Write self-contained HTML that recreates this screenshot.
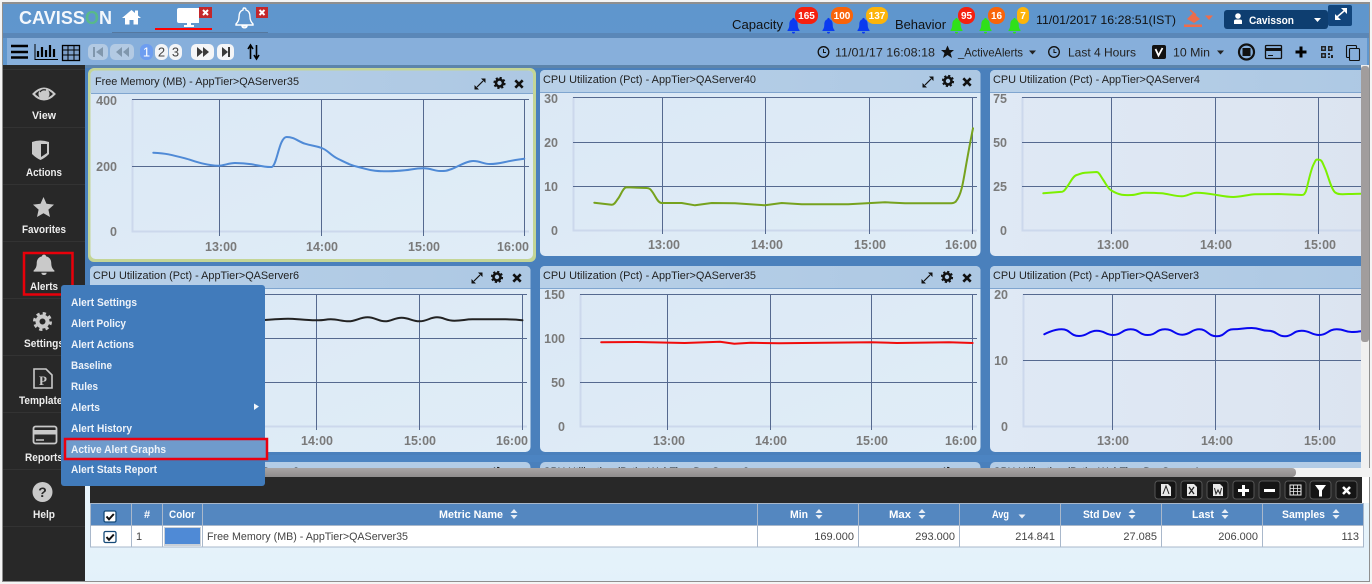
<!DOCTYPE html>
<html><head><meta charset="utf-8"><title>Active Alert Graphs</title>
<style>
html,body{margin:0;padding:0;width:1372px;height:584px;overflow:hidden;background:#fff}
svg{display:block;font-family:"Liberation Sans",sans-serif}
.t{font-size:11px;fill:#222}
.a{font-size:12.500px;font-weight:bold;fill:#7a7a7a}
.s{font-size:11px;font-weight:bold;fill:#eee}
.m{font-size:11px;font-weight:bold;fill:#eef3f9}
.h{font-size:11px;font-weight:bold;fill:#fff}
.c{font-size:11px;fill:#444}
.b{font-size:10px;font-weight:bold;fill:#fff;text-anchor:middle}
.k{font-size:12px;fill:#222}
.g{stroke:#55698f;stroke-width:1;fill:none}
.l{stroke:#ccd8ec;stroke-width:2;fill:none}
.p{fill:none;stroke-width:2;stroke-linejoin:round;stroke-linecap:round}
</style></head><body>
<svg xmlns="http://www.w3.org/2000/svg" width="1372" height="584" viewBox="0 0 1372 584">
<defs>
<linearGradient id="tg" x1="0" y1="0" x2="1" y2="0"><stop offset="0" stop-color="#b8d0e8"/><stop offset="1" stop-color="#adc8e3"/></linearGradient>
<linearGradient id="pg" x1="0" y1="0" x2="1" y2="1"><stop offset="0" stop-color="#dbe8f5"/><stop offset="1" stop-color="#e0edf7"/></linearGradient>
<linearGradient id="pg3" x1="0" y1="0" x2="1" y2="0"><stop offset="0" stop-color="#dfe9f5"/><stop offset="1" stop-color="#dce4f0"/></linearGradient>
<linearGradient id="bar" x1="0" y1="0" x2="0" y2="1"><stop offset="0" stop-color="#5f96cd"/><stop offset="1" stop-color="#6a9ed2"/></linearGradient>
<linearGradient id="bot" x1="0" y1="0" x2="0" y2="1"><stop offset="0" stop-color="#e9f5fc"/><stop offset="1" stop-color="#e3f1fa"/></linearGradient>
<linearGradient id="sc" x1="0" y1="0" x2="0" y2="1"><stop offset="0" stop-color="#a8a4a4"/><stop offset="1" stop-color="#8f8c8c"/></linearGradient>
<path id="bell" d="M10 1C11 1 11.6 1.7 11.6 2.6C14.6 3.4 15.6 6 15.6 9C15.6 12 16.5 14 18 15.5V16.5H2V15.5C3.5 14 4.4 12 4.4 9C4.4 6 5.4 3.4 8.4 2.6C8.4 1.7 9 1 10 1ZM8 17.5H12C12 19 11 19.6 10 19.6C9 19.6 8 19 8 17.5Z"/>
<g id="expand"><path d="M-3 3L3-3" stroke="#111" stroke-width="1.200"/><path d="M1-5.500H5.500V-1ZM-5.500 1V5.500H-1Z" fill="#111"/></g>
<g id="gear"><circle r="3.500" fill="none" stroke="#111" stroke-width="2.600"/><circle r="5.200" fill="none" stroke="#111" stroke-width="1.800" stroke-dasharray="2.200 1.880"/></g>
<g id="close"><path d="M-3.700-3.700L3.700 3.700M3.700-3.700L-3.700 3.700" stroke="#111" stroke-width="2.600"/></g>
<g id="sort"><path d="M-3.500-1L0-5L3.500-1ZM-3.500 1L0 5L3.500 1Z" fill="#e8eef6"/></g>
<g id="chk"><rect x="-6" y="-5.500" width="12" height="11" rx="1.500" fill="#fff" stroke="#154a78" stroke-width="1.300"/><path d="M-3.500 0L-1 2.800L3.800-2.500" fill="none" stroke="#111" stroke-width="2"/></g>
<g id="hdrbtn"><rect x="0" y="0" width="21" height="18" rx="3" fill="#151515" stroke="#555"/></g>
<clipPath id="c3"><rect x="85" y="455" width="1277" height="13"/></clipPath>
<clipPath id="rp"><rect x="985" y="66" width="376" height="402"/></clipPath>
</defs>

<!-- frame & bars -->
<rect width="1372" height="584" fill="#f4f4f4"/>
<rect x="2" y="2" width="1368" height="580" fill="#8f8f8f"/>
<rect x="3" y="4" width="1366" height="577" fill="url(#bar)"/>
<rect x="3" y="33" width="1366" height="5" fill="#5a87b8"/>
<rect x="7" y="38" width="1360" height="27" fill="#87afdb"/>
<rect x="85" y="65" width="1284" height="412" fill="#4a80bc"/>
<rect x="85" y="65" width="1284" height="3" fill="#5c84ab"/>
<rect x="85" y="455" width="1284" height="7" fill="#4c84c2"/>

<!-- top bar -->
<text x="19" y="24" font-size="18" font-weight="bold" fill="#f4f8fc" textLength="93" lengthAdjust="spacing">CAVISS<tspan fill="#58b98a">O</tspan>N</text>
<path d="M122 18L131.500 10L135 13V10.500H138V15.500L141 18H138V24.500H133.500V20H129.500V24.500H125V18Z" fill="#fff"/>
<path d="M179 8H199V23H191V25H194V27H184V25H187V23H179Q177 23 177 21V10Q177 8 179 8Z" fill="#fff"/>
<rect x="199" y="7" width="13" height="11" fill="#c3272b"/><path d="M203 10L208 15M208 10L203 15" stroke="#fff" stroke-width="2"/>
<rect x="155" y="28" width="57" height="2" fill="#f00"/>
<path d="M112 32.500H268" stroke="#55789f" stroke-width="1"/>
<path d="M244 8C246 8 246 9 246 10C250 11 250 15 250 17C250 20 251 22 253 24V25H236V24C238 22 239 20 239 17C239 15 239 11 243 10C243 9 243 8 244 8ZM242 26H247C247 27 246 27.800 244.500 27.800C243 27.800 242 27 242 26Z" fill="none" stroke="#fff" stroke-width="1.400"/>
<rect x="256" y="7" width="12" height="11" fill="#c3272b"/><path d="M259.500 10L264.500 15M264.500 10L259.500 15" stroke="#fff" stroke-width="2"/>

<text x="732" y="29" font-size="13" fill="#111" textLength="51" lengthAdjust="spacingAndGlyphs">Capacity</text>
<use href="#bell" transform="translate(786,17) scale(.75,.85)" fill="#0a3bf0"/>
<use href="#bell" transform="translate(821,17) scale(.75,.85)" fill="#0a3bf0"/>
<use href="#bell" transform="translate(856,17) scale(.75,.85)" fill="#0a3bf0"/>
<rect x="795" y="7" width="23" height="17" rx="8" fill="#f5200f"/><text class="b" x="806.500" y="19">165</text>
<rect x="831" y="7" width="22" height="17" rx="8" fill="#f9640a"/><text class="b" x="842" y="19">100</text>
<rect x="866" y="7" width="22" height="17" rx="8" fill="#fdb40a"/><text class="b" x="877" y="19">137</text>
<text x="895" y="29" font-size="13" fill="#111" textLength="51" lengthAdjust="spacingAndGlyphs">Behavior</text>
<use href="#bell" transform="translate(949,17) scale(.75,.85)" fill="#2fe01a"/>
<use href="#bell" transform="translate(978,17) scale(.75,.85)" fill="#2fe01a"/>
<use href="#bell" transform="translate(1007,17) scale(.75,.85)" fill="#2fe01a"/>
<rect x="958" y="7" width="17" height="17" rx="8" fill="#f5200f"/><text class="b" x="966.500" y="19">95</text>
<rect x="988" y="7" width="17" height="17" rx="8" fill="#f9640a"/><text class="b" x="996.500" y="19">16</text>
<rect x="1017" y="7" width="12" height="17" rx="6" fill="#fdb40a"/><text class="b" x="1023" y="19">7</text>
<text x="1036" y="24" font-size="12" fill="#111" textLength="140" lengthAdjust="spacingAndGlyphs">11/01/2017 16:28:51(IST)</text>
<path d="M1187 19L1193 13L1200 19L1194 23Z" fill="#ee6d4c"/><path d="M1190 10L1196 15" stroke="#ee6d4c" stroke-width="1.500"/><rect x="1184" y="24.500" width="18" height="2.500" fill="#ee6d4c"/>
<path d="M1205 15.500H1213L1209 20Z" fill="#ee6d4c"/>
<rect x="1224" y="10" width="104" height="19" rx="3" fill="#0e3e70"/>
<circle cx="1238" cy="16" r="2.800" fill="#fff"/><path d="M1234 24V21Q1234 19.500 1236 19.500H1240Q1242 19.500 1242 21V24Z" fill="#fff"/>
<text x="1249" y="24" font-size="11" font-weight="bold" fill="#fff" textLength="45" lengthAdjust="spacingAndGlyphs">Cavisson</text>
<path d="M1314 18H1321L1317.500 22Z" fill="#fff"/>
<rect x="1328" y="5" width="24" height="21" rx="2" fill="#11457c"/>
<path d="M1337 17L1344 11" stroke="#fff" stroke-width="1.500"/><path d="M1341 8H1347V14ZM1335 14V20H1341Z" fill="#fff"/>

<!-- toolbar left -->
<path d="M11 46H28M11 52H28M11 57.500H28" stroke="#000" stroke-width="2.400"/>
<path d="M35 44V59.500H58" fill="none" stroke="#000" stroke-width="1"/><path d="M38 57V51M42 57V47M46 57V50M50 57V45M54 57V49" stroke="#000" stroke-width="2.200"/>
<rect x="62.500" y="45.500" width="17" height="15" fill="#7d9fc9" stroke="#000" stroke-width="1.300"/><path d="M62 50H80M62 55H80M68 45V61M74 45V61" stroke="#000" stroke-width="1"/>
<rect x="88" y="44" width="20" height="16" rx="5" fill="#b3cae3"/><path d="M94 47V57" stroke="#8097ad" stroke-width="2"/><path d="M103 47V57L96 52Z" fill="#8097ad"/>
<rect x="110" y="44" width="24" height="16" rx="5" fill="#b3cae3"/><path d="M122 47V57L116 52ZM129 47V57L123 52Z" fill="#8097ad"/>
<rect x="140" y="44" width="13" height="16" rx="6" fill="#6d9df0"/><text x="146.500" y="56.500" font-size="13" fill="#fff" text-anchor="middle">1</text>
<rect x="155" y="44" width="13" height="16" rx="6" fill="#f2f4f7"/><text x="161.500" y="56.500" font-size="13" fill="#444" text-anchor="middle">2</text>
<rect x="169" y="44" width="13" height="16" rx="6" fill="#f2f4f7"/><text x="175.500" y="56.500" font-size="13" fill="#444" text-anchor="middle">3</text>
<rect x="191" y="44" width="23" height="16" rx="5" fill="#f4f5f7"/><path d="M197 47V57L203 52ZM203 47V57L209 52Z" fill="#3a3a3a"/>
<rect x="217" y="44" width="17" height="16" rx="5" fill="#f4f5f7"/><path d="M222 47V57L228 52Z" fill="#3a3a3a"/><path d="M229 47V57" stroke="#3a3a3a" stroke-width="2"/>
<path d="M250.500 59V46M248 49L250.500 45L253 49M256.500 45V58M254 55L256.500 59L259 55" fill="none" stroke="#000" stroke-width="1.600"/>

<!-- toolbar right -->
<circle cx="823.500" cy="52" r="5.300" fill="none" stroke="#111" stroke-width="1.300"/><path d="M823.500 49V52.500H826" fill="none" stroke="#111"/>
<text class="k" x="835" y="56.500" textLength="100" lengthAdjust="spacingAndGlyphs">11/01/17 16:08:18</text>
<path d="M947.500 45.500L949.500 50H954L950.500 53L952 58L947.500 55L943 58L944.500 53L941 50H945.500Z" fill="#111"/>
<text class="k" x="958" y="56.500" textLength="65" lengthAdjust="spacingAndGlyphs">_ActiveAlerts</text>
<path d="M1029 50.500H1036L1032.500 54.500Z" fill="#222"/>
<circle cx="1054" cy="52" r="5.300" fill="none" stroke="#111" stroke-width="1.300"/><path d="M1054 49V52.500H1056.500" fill="none" stroke="#111"/>
<text class="k" x="1068" y="56.500" textLength="68" lengthAdjust="spacingAndGlyphs">Last 4 Hours</text>
<rect x="1152" y="45" width="14" height="14" rx="2" fill="#111"/><path d="M1155.500 49L1158.500 55.500L1162.500 48" fill="none" stroke="#fff" stroke-width="1.800"/>
<text class="k" x="1173" y="56.500" textLength="37" lengthAdjust="spacingAndGlyphs">10 Min</text>
<path d="M1217 50.500H1224L1220.500 54.500Z" fill="#222"/>
<circle cx="1246.500" cy="52" r="7.500" fill="none" stroke="#111" stroke-width="2.200"/><rect x="1242.500" y="48" width="8" height="8" fill="#111"/>
<rect x="1265.500" y="45.500" width="16" height="13" rx="1" fill="none" stroke="#111" stroke-width="1.300"/><rect x="1265" y="48" width="17" height="3" fill="#111"/><path d="M1268 55.500H1273" stroke="#111"/>
<path d="M1301 46.500V57.500M1295.500 52H1306.500" stroke="#000" stroke-width="3"/>
<path d="M1321 46H1326V51H1321ZM1328 46H1332.500V51H1328ZM1321 53H1326V58H1321ZM1328 53H1330V55H1328ZM1331 55H1333V58H1331ZM1328 56.500H1330V58H1328Z" fill="#222"/><path d="M1322.500 47.500H1324.500V49.500H1322.500ZM1329.500 47.500H1331V49.500H1329.500ZM1322.500 54.500H1324.500V56.500H1322.500Z" fill="#87afdb"/>
<rect x="1346.500" y="45.500" width="10" height="12" rx="1" fill="none" stroke="#111" stroke-width="1.100"/><rect x="1349.500" y="48.500" width="10" height="12" rx="1" fill="#87afdb" stroke="#111" stroke-width="1.100"/>

<!-- panel 1 -->
<rect x="88" y="68" width="448" height="194" rx="6" fill="#c4d596"/>
<rect x="90.500" y="70.500" width="442.500" height="188.500" rx="5" fill="url(#pg)"/>
<path d="M90.500 93V75.500Q90.500 70.500 95.500 70.500H528Q533 70.500 533 75.500V93Z" fill="url(#tg)"/><path d="M91 93.500H533" stroke="#7fa5cf"/>
<text class="t" x="95" y="85" textLength="204" lengthAdjust="spacingAndGlyphs">Free Memory (MB) - AppTier&gt;QAServer35</text>
<use href="#expand" x="480" y="84"/><use href="#gear" x="499.500" y="83"/><use href="#close" x="519" y="84"/>
<path class="l" d="M132.500 99V231.500H529"/>
<path class="g" d="M132 99.500H529M132 166.500H529M219.500 99V236M321.500 99V236M423.500 99V236M524.500 99V236"/>
<text class="a" x="117" y="105" text-anchor="end">400</text><text class="a" x="117" y="171" text-anchor="end">200</text><text class="a" x="117" y="236" text-anchor="end">0</text>
<text class="a" x="205" y="251">13:00</text><text class="a" x="306" y="251">14:00</text><text class="a" x="408" y="251">15:00</text><text class="a" x="497" y="251">16:00</text>
<path class="p" stroke="#4f8ad6" d="M153.300 152.700C160 153 164 153.400 168.300 154.300S180 157 185 158.300S196 162 201.700 163.300S213 165.700 218.300 165.700S229 163 235 163S246 163.400 251.700 164.300S266 167.500 271.700 167C277 166 279 137 286.700 137S298 141.500 305 143.700S315 145.500 321.700 148S330 155 338.300 159S350 165 358.300 167S368 170 375 170.700S382 171.300 388.300 171.300S398 171 405 170.300S415 168.300 423.300 168.300S434 171 440 171S446 171 451.700 169S466 161 473.300 161S483 164 490 164S501 162.800 508.300 161.300S518 159.500 524.300 158.700"/>

<!-- panel 2 -->
<rect x="540" y="70" width="440.500" height="186" rx="5" fill="url(#pg)"/>
<path d="M540 92V75Q540 70 545 70H975.500Q980.500 70 980.500 75V92Z" fill="url(#tg)"/><path d="M540 92.500H980.500" stroke="#7fa5cf"/>
<text class="t" x="543" y="83" textLength="213" lengthAdjust="spacingAndGlyphs">CPU Utilization (Pct) - AppTier&gt;QAServer40</text>
<use href="#expand" x="928" y="82"/><use href="#gear" x="948" y="81"/><use href="#close" x="967" y="82"/>
<path class="l" d="M573.500 97V230.500H977"/>
<path class="g" d="M573 97.500H977M573 142.500H977M573 186.500H977M662.500 97V234M765.500 97V234M869.500 97V234M972.500 97V234"/>
<text class="a" x="558" y="103" text-anchor="end">30</text><text class="a" x="558" y="147" text-anchor="end">20</text><text class="a" x="558" y="191" text-anchor="end">10</text><text class="a" x="558" y="235" text-anchor="end">0</text>
<text class="a" x="648" y="249">13:00</text><text class="a" x="751" y="249">14:00</text><text class="a" x="854" y="249">15:00</text><text class="a" x="945" y="249">16:00</text>
<path class="p" stroke="#76a21e" d="M594.300 202.700L611.700 204.700C615 204.700 616 201 618.300 198.300S623 187.300 626.700 187.300L646.700 188C650 188 651 190 653.300 193.300S658 203 661.700 203L681.700 203L695 205.300L711.700 203L735 203.300L765 205.300L781.700 203L801.700 204.300L848.300 204.300L885 202.300L905 203.300L948.300 203.300C953 203.300 954 203 955.700 201.700C958 199 960 195 961.700 188.300S964.500 174 966.700 161.700S971 138 973 128.300"/>

<!-- panel 3 -->
<g clip-path="url(#rp)">
<rect x="990" y="70" width="400" height="186" rx="5" fill="url(#pg3)"/>
<path d="M990 92V75Q990 70 995 70H1390V92Z" fill="url(#tg)"/><path d="M990 92.500H1380" stroke="#7fa5cf"/>
<text class="t" x="993" y="83" textLength="207" lengthAdjust="spacingAndGlyphs">CPU Utilization (Pct) - AppTier&gt;QAServer4</text>
<path class="l" d="M1022.500 97V230.500H1361"/>
<path class="g" d="M1022 97.500H1361M1022 142.500H1361M1022 186.500H1361M1111.500 97V234M1215.500 97V234M1318.500 97V234"/>
<text class="a" x="1007" y="103" text-anchor="end">75</text><text class="a" x="1007" y="147" text-anchor="end">50</text><text class="a" x="1007" y="191" text-anchor="end">25</text><text class="a" x="1007" y="235" text-anchor="end">0</text>
<text class="a" x="1097" y="249">13:00</text><text class="a" x="1200" y="249">14:00</text><text class="a" x="1304" y="249">15:00</text>
<path class="p" stroke="#7cf000" d="M1043.300 193.300L1062.300 191.700C1065 191 1066 188 1068.300 185S1073 176 1076.700 175S1081 173 1085 172.700L1096.700 172C1099 172 1100.500 176 1103.300 180S1108 188.500 1111 190.300S1117 194 1121.700 194.700S1127 195 1131.700 195S1140 192.700 1145 192.700S1156 192.800 1161.700 193.300S1176 196.300 1181.700 196.300S1191 192.700 1196.700 192.700S1208 193.500 1215 194.700S1227 197 1233.300 197S1248 194.700 1255 194.300L1278.300 194L1301.700 195C1304 195 1304.500 194 1305.700 191.700S1310 172 1313.300 165S1316 159.700 1319 159.700S1322.500 163 1325 168.300S1331 189 1335 192.300S1345 193.700 1361 193.700"/>
</g>

<!-- panel 4 -->
<rect x="90" y="266" width="440.500" height="186" rx="5" fill="url(#pg)"/>
<path d="M90 288V271Q90 266 95 266H525.500Q530.500 266 530.500 271V288Z" fill="url(#tg)"/><path d="M90 288.500H530.500" stroke="#7fa5cf"/>
<text class="t" x="93" y="279" textLength="206" lengthAdjust="spacingAndGlyphs">CPU Utilization (Pct) - AppTier&gt;QAServer6</text>
<use href="#expand" x="477" y="278"/><use href="#gear" x="497" y="277"/><use href="#close" x="517" y="278"/>
<path class="l" d="M130.500 294V426.500H527"/>
<path class="g" d="M130 294.500H527M130 338.500H527M130 382.500H527M214.500 294V430M316.500 294V430M419.500 294V430M522.500 294V430"/>
<text class="a" x="301" y="445">14:00</text><text class="a" x="404" y="445">15:00</text><text class="a" x="496" y="445">16:00</text>
<path class="p" stroke="#222" d="M264.700 320S280 318.700 288 318.700S305 320.300 315.700 320.300S324 319.300 330.800 319.300S342 321.300 348.700 321.300S360 317.300 367.600 317.300S378 321.300 385 321.300S394 317.700 401.600 317.700S412 321.300 419.500 321.300S430 317.300 437 317.300S446 320.700 454.400 320.700S465 319.300 472.400 319.300H505.400S516 319.300 522.400 320.300"/>

<!-- panel 5 -->
<rect x="540" y="266" width="440.500" height="186" rx="5" fill="url(#pg)"/>
<path d="M540 288V271Q540 266 545 266H975.500Q980.500 266 980.500 271V288Z" fill="url(#tg)"/><path d="M540 288.500H980.500" stroke="#7fa5cf"/>
<text class="t" x="543" y="279" textLength="213" lengthAdjust="spacingAndGlyphs">CPU Utilization (Pct) - AppTier&gt;QAServer35</text>
<use href="#expand" x="927" y="278"/><use href="#gear" x="947" y="277"/><use href="#close" x="967" y="278"/>
<path class="l" d="M580.500 294V426.500H977"/>
<path class="g" d="M580 294.500H977M580 338.500H977M580 382.500H977M667.500 294V430M770.500 294V430M871.500 294V430M972.500 294V430"/>
<text class="a" x="565" y="299" text-anchor="end">150</text><text class="a" x="565" y="343" text-anchor="end">100</text><text class="a" x="565" y="387" text-anchor="end">50</text><text class="a" x="565" y="431" text-anchor="end">0</text>
<text class="a" x="653" y="445">13:00</text><text class="a" x="755" y="445">14:00</text><text class="a" x="856" y="445">15:00</text><text class="a" x="945" y="445">16:00</text>
<path class="p" stroke="#f00c0c" d="M601.200 342.300L637.500 342L684.700 343L720 341.700L734.300 343.700L750.800 342.700L779 343.300L871 342.300L897 343L949 342.300L972.600 343"/>

<!-- panel 6 -->
<g clip-path="url(#rp)">
<rect x="990" y="266" width="400" height="186" rx="5" fill="url(#pg3)"/>
<path d="M990 288V271Q990 266 995 266H1390V288Z" fill="url(#tg)"/><path d="M990 288.500H1380" stroke="#7fa5cf"/>
<text class="t" x="993" y="279" textLength="206" lengthAdjust="spacingAndGlyphs">CPU Utilization (Pct) - AppTier&gt;QAServer3</text>
<path class="l" d="M1023.500 294V426.500H1361"/>
<path class="g" d="M1023 294.500H1361M1023 360.500H1361M1112.500 294V430M1215.500 294V430M1319.500 294V430"/>
<text class="a" x="1008" y="299" text-anchor="end">20</text><text class="a" x="1008" y="365" text-anchor="end">10</text><text class="a" x="1008" y="431" text-anchor="end">0</text>
<text class="a" x="1097" y="445">13:00</text><text class="a" x="1201" y="445">14:00</text><text class="a" x="1304" y="445">15:00</text>
<path class="p" stroke="#0808f0" d="M1044.300 334.300S1053 329.300 1061.700 329.300S1070 336 1079 336S1088 330.700 1096.700 330.700S1105 335 1113.300 335S1122 329.300 1130.700 329.300S1139 335 1147.700 335S1156 329.300 1165 329.300S1174 334.700 1182.300 334.700S1191 329.300 1199.300 329.300S1208 336.300 1216.700 336.300S1225 329.300 1233.300 329.300S1243 328 1251.700 328S1260 330.700 1268.300 330.700S1277 336.300 1285 336.300S1293 330.700 1301.700 330.700S1311 335 1319.300 335S1328 329.300 1336.700 329.300S1344 332 1351.700 332S1358 331.300 1361 331.300"/>
</g>

<!-- row 3 peeking -->
<g clip-path="url(#c3)">
<rect x="90" y="462" width="440.500" height="30" rx="5" fill="#b3cce6"/>
<rect x="540" y="462" width="440.500" height="30" rx="5" fill="#b3cce6"/>
<rect x="990" y="462" width="400" height="30" rx="5" fill="#b3cce6"/>
<text class="t" x="93" y="475" textLength="206" lengthAdjust="spacingAndGlyphs">CPU Utilization (Pct) - WebTier&gt;DevServer2</text>
<text class="t" x="543" y="475" textLength="206" lengthAdjust="spacingAndGlyphs">CPU Utilization (Pct) - WebTier&gt;DevServer3</text>
<text class="t" x="993" y="475" textLength="206" lengthAdjust="spacingAndGlyphs">CPU Utilization (Pct) - WebTier&gt;DevServer4</text>
<use href="#gear" x="497" y="473"/><use href="#gear" x="947" y="473"/>
</g>

<!-- scrollbars -->
<rect x="1361" y="65" width="8" height="403" fill="#f0f0f0"/>
<rect x="1361" y="66" width="8" height="276" rx="3" fill="#a19d9d"/>
<rect x="85" y="468" width="1285" height="9" fill="#f2f2f2"/>
<rect x="85" y="468" width="1211" height="9" rx="4" fill="url(#sc)"/>

<!-- bottom -->
<rect x="85" y="477" width="1284" height="104" fill="url(#bot)"/>
<rect x="90" y="477" width="1272" height="26" fill="#282828"/>
<rect x="1362" y="477" width="7" height="26" fill="#fff"/>
<g fill="none">
<use href="#hdrbtn" x="1155" y="481"/><use href="#hdrbtn" x="1181" y="481"/><use href="#hdrbtn" x="1207" y="481"/><use href="#hdrbtn" x="1233" y="481"/><use href="#hdrbtn" x="1259" y="481"/><use href="#hdrbtn" x="1285" y="481"/><use href="#hdrbtn" x="1310" y="481"/><use href="#hdrbtn" x="1336" y="481"/>
</g>
<path d="M1161 484H1168L1171 487V496H1161Z" fill="#e8e8e8"/><path d="M1163 494L1166 486L1169 494" stroke="#222" fill="none"/>
<path d="M1187 484H1194L1197 487V496H1187Z" fill="#e8e8e8"/><path d="M1189 487L1194 494M1194 487L1189 494" stroke="#222" stroke-width="1.300"/>
<path d="M1213 484H1220L1223 487V496H1213Z" fill="#e8e8e8"/><path d="M1214.500 488L1216 494L1218 490L1220 494L1221.500 488" stroke="#222" fill="none"/>
<path d="M1243.500 485V496M1238 490.500H1249" stroke="#fff" stroke-width="3"/>
<path d="M1264 490.500H1275" stroke="#fff" stroke-width="3"/>
<rect x="1290" y="485" width="11" height="10" fill="none" stroke="#eee"/><path d="M1290 488.500H1301M1290 491.500H1301M1293.500 485V495M1297.500 485V495" stroke="#eee" stroke-width=".8"/>
<path d="M1315 485H1326L1322 490.500V496.500H1319V490.500Z" fill="#fff"/>
<path d="M1343 487L1350 494M1350 487L1343 494" stroke="#fff" stroke-width="2.600"/>

<!-- table -->
<rect x="90.500" y="503.500" width="1273" height="22" fill="#5487c0"/>
<rect x="90.500" y="525.500" width="1273" height="22" fill="#fff"/>
<path d="M90.500 503.500H1363.500M90.500 525.500H1363.500M90.500 547H1363.500M90.500 503V547.500M131.500 503V547.500M162.500 503V547.500M202.500 503V547.500M757.500 503V547.500M858.500 503V547.500M959.500 503V547.500M1060.500 503V547.500M1161.500 503V547.500M1262.500 503V547.500M1363.500 503V547.500" stroke="#a9b8cb" fill="none"/>
<use href="#chk" x="110" y="516.500"/><use href="#chk" x="110" y="537"/>
<text class="h" x="147" y="518" text-anchor="middle">#</text>
<text class="h" x="169" y="518" textLength="26" lengthAdjust="spacingAndGlyphs">Color</text>
<text class="h" x="439" y="518" textLength="64" lengthAdjust="spacingAndGlyphs">Metric Name</text><use href="#sort" x="514" y="514"/>
<text class="h" x="790" y="518" textLength="18" lengthAdjust="spacingAndGlyphs">Min</text><use href="#sort" x="819" y="514"/>
<text class="h" x="889" y="518" textLength="22" lengthAdjust="spacingAndGlyphs">Max</text><use href="#sort" x="922" y="514"/>
<text class="h" x="992" y="518" textLength="17" lengthAdjust="spacingAndGlyphs">Avg</text><path d="M1018.500 514.500H1025.500L1022 518.500Z" fill="#e8eef6"/>
<text class="h" x="1083" y="518" textLength="38" lengthAdjust="spacingAndGlyphs">Std Dev</text><use href="#sort" x="1132" y="514"/>
<text class="h" x="1192" y="518" textLength="22" lengthAdjust="spacingAndGlyphs">Last</text><use href="#sort" x="1225" y="514"/>
<text class="h" x="1282" y="518" textLength="43" lengthAdjust="spacingAndGlyphs">Samples</text><use href="#sort" x="1336" y="514"/>
<text class="c" x="136" y="540">1</text>
<rect x="164" y="527" width="37" height="19" fill="#c9d0d8"/><rect x="165" y="528" width="35" height="16" fill="#4f8ad6"/>
<text class="c" x="207" y="540" textLength="201" lengthAdjust="spacingAndGlyphs">Free Memory (MB) - AppTier&gt;QAServer35</text>
<text class="c" x="854" y="540" text-anchor="end">169.000</text>
<text class="c" x="955" y="540" text-anchor="end">293.000</text>
<text class="c" x="1055" y="540" text-anchor="end">214.841</text>
<text class="c" x="1157" y="540" text-anchor="end">27.085</text>
<text class="c" x="1258" y="540" text-anchor="end">206.000</text>
<text class="c" x="1359" y="540" text-anchor="end">113</text>

<!-- sidebar -->
<rect x="3" y="65" width="82" height="516" fill="#282828"/>
<path d="M3 69.500H85M3 127.500H85M3 184.500H85M3 241.500H85M3 298.500H85M3 355.500H85M3 412.500H85M3 469.500H85M3 526.500H85" stroke="#333" stroke-width="1"/>
<path d="M33.500 94Q44 83 54.500 94Q44 105 33.500 94Z" fill="none" stroke="#c9c9c9" stroke-width="2"/><circle cx="44" cy="94" r="5.500" fill="#c9c9c9"/><path d="M40 92Q42 89 46 90" fill="none" stroke="#282828" stroke-width="1.200"/>
<path d="M32 142Q40 139 49 142V154Q45 158 40.500 160Q36 158 32 154Z" fill="#c9c9c9"/>
<path d="M41 144H47V153L41 157Z" fill="#282828"/>
<path d="M43.500 197L46.500 203.800L54 204.600L48.400 209.600L50 217L43.500 213.200L37 217L38.600 209.600L33 204.600L40.500 203.800Z" fill="#c9c9c9"/>
<use href="#bell" transform="translate(31,253.500) scale(1.300,1.100)" fill="#c9c9c9"/>
<circle cx="42.500" cy="321.500" r="5" fill="none" stroke="#c9c9c9" stroke-width="4"/><circle cx="42.500" cy="321.500" r="8" fill="none" stroke="#c9c9c9" stroke-width="3" stroke-dasharray="3.200 3.080"/>
<path d="M34 369H46L52 375V388H34Z" fill="none" stroke="#c9c9c9" stroke-width="1.600"/><text x="43" y="385" font-family="Liberation Serif" font-size="13" font-weight="bold" fill="#c9c9c9" text-anchor="middle">P</text>
<rect x="33.500" y="426.500" width="23" height="17" rx="2" fill="none" stroke="#c9c9c9" stroke-width="1.800"/><rect x="33" y="430" width="24" height="4.500" fill="#c9c9c9"/><path d="M36 440H44" stroke="#c9c9c9" stroke-width="1.500"/>
<circle cx="42.500" cy="492" r="10" fill="#c9c9c9"/><text x="42.500" y="497" font-size="14" font-weight="bold" fill="#282828" text-anchor="middle">?</text>
<text class="s" x="32" y="119" textLength="24" lengthAdjust="spacingAndGlyphs">View</text>
<text class="s" x="26" y="176" textLength="36" lengthAdjust="spacingAndGlyphs">Actions</text>
<text class="s" x="22" y="233" textLength="44" lengthAdjust="spacingAndGlyphs">Favorites</text>
<text class="s" x="30" y="290" textLength="28" lengthAdjust="spacingAndGlyphs">Alerts</text>
<text class="s" x="24" y="347" textLength="40" lengthAdjust="spacingAndGlyphs">Settings</text>
<text class="s" x="19" y="404" textLength="49" lengthAdjust="spacingAndGlyphs">Templates</text>
<text class="s" x="25" y="461" textLength="38" lengthAdjust="spacingAndGlyphs">Reports</text>
<text class="s" x="33" y="518" textLength="22" lengthAdjust="spacingAndGlyphs">Help</text>
<rect x="24" y="253" width="48.500" height="41.500" fill="none" stroke="#e8000a" stroke-width="2.500"/>

<!-- menu -->
<rect x="61" y="285" width="204" height="201" rx="3" fill="#417bbb"/>
<rect x="65" y="439" width="202" height="20" fill="#6f9bcc" stroke="#ea0010" stroke-width="2.500"/>
<text class="m" x="71" y="306" textLength="66" lengthAdjust="spacingAndGlyphs">Alert Settings</text>
<text class="m" x="71" y="327" textLength="55" lengthAdjust="spacingAndGlyphs">Alert Policy</text>
<text class="m" x="71" y="348" textLength="63" lengthAdjust="spacingAndGlyphs">Alert Actions</text>
<text class="m" x="71" y="369" textLength="41" lengthAdjust="spacingAndGlyphs">Baseline</text>
<text class="m" x="71" y="390" textLength="27" lengthAdjust="spacingAndGlyphs">Rules</text>
<text class="m" x="71" y="411" textLength="29" lengthAdjust="spacingAndGlyphs">Alerts</text>
<path d="M254 403.500L259 406.500L254 410Z" fill="#f2f6fb"/>
<text class="m" x="71" y="432" textLength="61" lengthAdjust="spacingAndGlyphs">Alert History</text>
<text class="m" x="71" y="453" textLength="95" lengthAdjust="spacingAndGlyphs">Active Alert Graphs</text>
<text class="m" x="71" y="473" textLength="86" lengthAdjust="spacingAndGlyphs">Alert Stats Report</text>
</svg>
</body></html>
